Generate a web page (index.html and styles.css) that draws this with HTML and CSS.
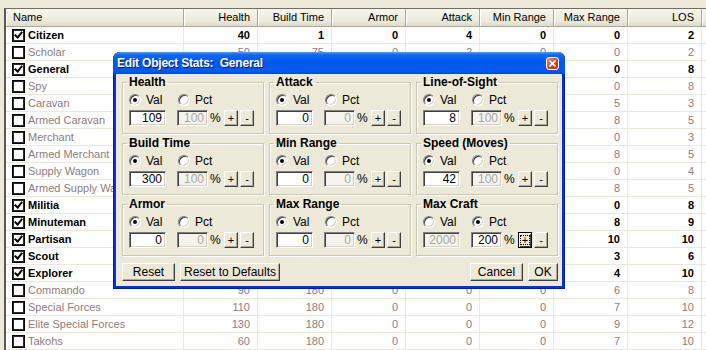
FILE: index.html
```html
<!DOCTYPE html>
<html lang="en">
<head>
    <meta charset="UTF-8">
    <title>Edit Object Stats</title>
    <link rel="stylesheet" href="styles.css">
</head>
<body>
    <div class="list">
        <div class="head">
            <div class="hcell left">Name</div>
            <div class="hcell">Health</div>
            <div class="hcell">Build Time</div>
            <div class="hcell">Armor</div>
            <div class="hcell">Attack</div>
            <div class="hcell">Min Range</div>
            <div class="hcell">Max Range</div>
            <div class="hcell">LOS</div>
            <div class="hcell rest"></div>
        </div>
        <div class="row on"><div class="cell name"><span class="check"></span>Citizen</div><div class="cell">40</div><div class="cell">1</div><div class="cell">0</div><div class="cell">4</div><div class="cell">0</div><div class="cell">0</div><div class="cell">2</div><div class="cell"></div></div>
        <div class="row"><div class="cell name"><span class="check"></span>Scholar</div><div class="cell">50</div><div class="cell">75</div><div class="cell">0</div><div class="cell">2</div><div class="cell">0</div><div class="cell">0</div><div class="cell">2</div><div class="cell"></div></div>
        <div class="row on"><div class="cell name"><span class="check"></span>General</div><div class="cell">109</div><div class="cell">300</div><div class="cell">0</div><div class="cell">0</div><div class="cell">0</div><div class="cell">0</div><div class="cell">8</div><div class="cell"></div></div>
        <div class="row"><div class="cell name"><span class="check"></span>Spy</div><div class="cell">50</div><div class="cell">60</div><div class="cell">0</div><div class="cell">2</div><div class="cell">0</div><div class="cell">0</div><div class="cell">8</div><div class="cell"></div></div>
        <div class="row"><div class="cell name"><span class="check"></span>Caravan</div><div class="cell">80</div><div class="cell">90</div><div class="cell">2</div><div class="cell">0</div><div class="cell">0</div><div class="cell">5</div><div class="cell">3</div><div class="cell"></div></div>
        <div class="row"><div class="cell name"><span class="check"></span>Armed Caravan</div><div class="cell">100</div><div class="cell">120</div><div class="cell">2</div><div class="cell">4</div><div class="cell">0</div><div class="cell">8</div><div class="cell">5</div><div class="cell"></div></div>
        <div class="row"><div class="cell name"><span class="check"></span>Merchant</div><div class="cell">60</div><div class="cell">90</div><div class="cell">0</div><div class="cell">0</div><div class="cell">0</div><div class="cell">0</div><div class="cell">3</div><div class="cell"></div></div>
        <div class="row"><div class="cell name"><span class="check"></span>Armed Merchant</div><div class="cell">80</div><div class="cell">120</div><div class="cell">1</div><div class="cell">4</div><div class="cell">0</div><div class="cell">8</div><div class="cell">5</div><div class="cell"></div></div>
        <div class="row"><div class="cell name"><span class="check"></span>Supply Wagon</div><div class="cell">80</div><div class="cell">90</div><div class="cell">2</div><div class="cell">0</div><div class="cell">0</div><div class="cell">0</div><div class="cell">4</div><div class="cell"></div></div>
        <div class="row"><div class="cell name"><span class="check"></span>Armed Supply Wagon</div><div class="cell">100</div><div class="cell">120</div><div class="cell">2</div><div class="cell">4</div><div class="cell">0</div><div class="cell">8</div><div class="cell">5</div><div class="cell"></div></div>
        <div class="row on"><div class="cell name"><span class="check"></span>Militia</div><div class="cell">60</div><div class="cell">60</div><div class="cell">0</div><div class="cell">4</div><div class="cell">0</div><div class="cell">0</div><div class="cell">8</div><div class="cell"></div></div>
        <div class="row on"><div class="cell name"><span class="check"></span>Minuteman</div><div class="cell">80</div><div class="cell">90</div><div class="cell">0</div><div class="cell">5</div><div class="cell">0</div><div class="cell">8</div><div class="cell">9</div><div class="cell"></div></div>
        <div class="row on"><div class="cell name"><span class="check"></span>Partisan</div><div class="cell">90</div><div class="cell">120</div><div class="cell">0</div><div class="cell">6</div><div class="cell">0</div><div class="cell">10</div><div class="cell">10</div><div class="cell"></div></div>
        <div class="row on"><div class="cell name"><span class="check"></span>Scout</div><div class="cell">60</div><div class="cell">60</div><div class="cell">0</div><div class="cell">2</div><div class="cell">0</div><div class="cell">3</div><div class="cell">6</div><div class="cell"></div></div>
        <div class="row on"><div class="cell name"><span class="check"></span>Explorer</div><div class="cell">70</div><div class="cell">90</div><div class="cell">0</div><div class="cell">3</div><div class="cell">0</div><div class="cell">4</div><div class="cell">10</div><div class="cell"></div></div>
        <div class="row"><div class="cell name"><span class="check"></span>Commando</div><div class="cell">90</div><div class="cell">180</div><div class="cell">0</div><div class="cell">0</div><div class="cell">0</div><div class="cell">6</div><div class="cell">8</div><div class="cell"></div></div>
        <div class="row"><div class="cell name"><span class="check"></span>Special Forces</div><div class="cell">110</div><div class="cell">180</div><div class="cell">0</div><div class="cell">0</div><div class="cell">0</div><div class="cell">7</div><div class="cell">10</div><div class="cell"></div></div>
        <div class="row"><div class="cell name"><span class="check"></span>Elite Special Forces</div><div class="cell">130</div><div class="cell">180</div><div class="cell">0</div><div class="cell">0</div><div class="cell">0</div><div class="cell">9</div><div class="cell">12</div><div class="cell"></div></div>
        <div class="row"><div class="cell name"><span class="check"></span>Takohs</div><div class="cell">60</div><div class="cell">180</div><div class="cell">0</div><div class="cell">0</div><div class="cell">0</div><div class="cell">7</div><div class="cell">10</div><div class="cell"></div></div>
    </div>

    <div class="dialog">
        <div class="titlebar">
            <span class="title">Edit Object Stats:&nbsp; General</span>
            <span class="close">
                <svg width="7" height="7" viewBox="0 0 7 7"><path d="M0.5 0.5 L6.5 6.5 M6.5 0.5 L0.5 6.5" stroke="#fff" stroke-width="1.6"/></svg>
            </span>
        </div>
        <div class="client">
            <div class="groups">
                <fieldset class="group">
                    <legend>Health</legend>
                    <div class="opts"><span class="opt"><span class="radio sel"></span>Val</span><span class="opt"><span class="radio"></span>Pct</span></div>
                    <div class="inputs"><span class="field">109</span><span class="field pct off">100</span><span class="unit">%</span><span class="btn plus">+</span><span class="btn">-</span></div>
                </fieldset>
                <fieldset class="group">
                    <legend>Attack</legend>
                    <div class="opts"><span class="opt"><span class="radio sel"></span>Val</span><span class="opt"><span class="radio"></span>Pct</span></div>
                    <div class="inputs"><span class="field">0</span><span class="field pct off">0</span><span class="unit">%</span><span class="btn plus">+</span><span class="btn">-</span></div>
                </fieldset>
                <fieldset class="group">
                    <legend>Line-of-Sight</legend>
                    <div class="opts"><span class="opt"><span class="radio sel"></span>Val</span><span class="opt"><span class="radio"></span>Pct</span></div>
                    <div class="inputs"><span class="field">8</span><span class="field pct off">100</span><span class="unit">%</span><span class="btn plus">+</span><span class="btn">-</span></div>
                </fieldset>
                <fieldset class="group">
                    <legend>Build Time</legend>
                    <div class="opts"><span class="opt"><span class="radio sel"></span>Val</span><span class="opt"><span class="radio"></span>Pct</span></div>
                    <div class="inputs"><span class="field">300</span><span class="field pct off">100</span><span class="unit">%</span><span class="btn plus">+</span><span class="btn">-</span></div>
                </fieldset>
                <fieldset class="group">
                    <legend>Min Range</legend>
                    <div class="opts"><span class="opt"><span class="radio sel"></span>Val</span><span class="opt"><span class="radio"></span>Pct</span></div>
                    <div class="inputs"><span class="field">0</span><span class="field pct off">0</span><span class="unit">%</span><span class="btn plus">+</span><span class="btn">-</span></div>
                </fieldset>
                <fieldset class="group">
                    <legend>Speed (Moves)</legend>
                    <div class="opts"><span class="opt"><span class="radio sel"></span>Val</span><span class="opt"><span class="radio"></span>Pct</span></div>
                    <div class="inputs"><span class="field">42</span><span class="field pct off">100</span><span class="unit">%</span><span class="btn plus">+</span><span class="btn">-</span></div>
                </fieldset>
                <fieldset class="group">
                    <legend>Armor</legend>
                    <div class="opts"><span class="opt"><span class="radio sel"></span>Val</span><span class="opt"><span class="radio"></span>Pct</span></div>
                    <div class="inputs"><span class="field">0</span><span class="field pct off">0</span><span class="unit">%</span><span class="btn plus">+</span><span class="btn">-</span></div>
                </fieldset>
                <fieldset class="group">
                    <legend>Max Range</legend>
                    <div class="opts"><span class="opt"><span class="radio sel"></span>Val</span><span class="opt"><span class="radio"></span>Pct</span></div>
                    <div class="inputs"><span class="field">0</span><span class="field pct off">0</span><span class="unit">%</span><span class="btn plus">+</span><span class="btn">-</span></div>
                </fieldset>
                <fieldset class="group">
                    <legend>Max Craft</legend>
                    <div class="opts"><span class="opt"><span class="radio"></span>Val</span><span class="opt"><span class="radio sel"></span>Pct</span></div>
                    <div class="inputs"><span class="field off">2000</span><span class="field pct">200</span><span class="unit">%</span><span class="btn plus focus"><span>+</span></span><span class="btn">-</span></div>
                </fieldset>
            </div>
            <div class="actions">
                <span class="button reset">Reset</span>
                <span class="button defaults">Reset to Defaults</span>
                <span class="spacer"></span>
                <span class="button cancel">Cancel</span>
                <span class="button ok">OK</span>
            </div>
        </div>
    </div>
</body>
</html>
```

FILE: styles.css
```css
body {
    margin: 0;
    width: 706px;
    height: 350px;
    overflow: hidden;
    position: relative;
    background-color: #ece9d8;
    font-family: "Liberation Sans", Arial, sans-serif;
    font-size: 11px;
    color: #000;
}
.list {
    margin: 8px 0 0 4px;
    height: 342px;
    background-color: #fff;
    border-top: 1px solid #716f64;
    border-left: 2px solid #5b5a52;
    box-sizing: border-box;
    overflow: hidden;
}
.head,
.row {
    display: grid;
    grid-template-columns: 178px repeat(7, 74px) 1fr;
}
.head {
    height: 18px;
}
.hcell {
    box-sizing: border-box;
    padding: 0 7px;
    line-height: 17px;
    text-align: right;
    background: linear-gradient(#f7f6ef, #ebeadb 70%, #dedbcb);
    border-right: 1px solid #aca899;
    border-bottom: 1px solid #aca899;
    box-shadow: inset 1px 0 0 #fff;
}
.hcell.left {
    text-align: left;
}
.hcell.rest {
    border-right: none;
}
.row {
    height: 17px;
    color: #8d7d7d;
}
.row.on {
    color: #000;
    font-weight: bold;
}
.cell {
    box-sizing: border-box;
    padding-right: 7px;
    line-height: 16px;
    text-align: right;
    border-right: 1px solid #ece9dc;
    border-bottom: 1px solid #ece9dc;
    white-space: nowrap;
    overflow: hidden;
}
.cell.name {
    display: flex;
    align-items: center;
    padding-left: 6px;
    text-align: left;
}
.check {
    position: relative;
    width: 13px;
    height: 13px;
    box-sizing: border-box;
    margin-right: 3px;
    background-color: #fff;
    border: 1px solid #000;
    box-shadow: inset 0 0 0 1px #2a2a2a;
    flex-shrink: 0;
}
.row.on .check::after {
    content: "";
    position: absolute;
    left: 3px;
    top: 0px;
    width: 3px;
    height: 6px;
    border: solid #000;
    border-width: 0 2px 2px 0;
    transform: rotate(40deg);
}

/* dialog */
.dialog {
    position: absolute;
    left: 113px;
    top: 52px;
    width: 452px;
    height: 237px;
    box-sizing: border-box;
    padding: 0 3px 3px;
    display: flex;
    flex-direction: column;
    background-color: #0831d9;
    border-radius: 7px 7px 0 0;
    box-shadow: inset 1px 0 0 #0019cf, inset -1px 0 0 #001ea0, inset 0 -1px 0 #001ea0;
}
.titlebar {
    height: 22px;
    margin: 0 -3px;
    padding: 0 6px 0 4px;
    display: flex;
    align-items: center;
    justify-content: space-between;
    border-radius: 7px 7px 0 0;
    background: linear-gradient(#4aa0ff, #1268f5 12%, #0058ea 45%, #005cf2 85%, #004ad9);
    color: #fff;
    font-weight: bold;
    font-size: 12px;
    letter-spacing: -0.2px;
    text-shadow: 1px 1px 0 #0a1883;
}
.close {
    width: 13px;
    height: 13px;
    box-sizing: border-box;
    display: flex;
    align-items: center;
    justify-content: center;
    border: 1px solid #fff;
    border-radius: 3px;
    background: linear-gradient(135deg, #f08a6c, #d6431e 60%, #c1350f);
}
.client {
    flex: 1;
    padding: 1px 4px 0 6px;
    background-color: #ece9d8;
    display: flex;
    flex-direction: column;
}
.groups {
    display: grid;
    grid-template-columns: repeat(3, 142px);
    column-gap: 5px;
    row-gap: 2px;
}
.group {
    margin: 0;
    padding: 4px 6px 7px;
    border: 1px solid #c9c6b6;
    box-shadow: 1px 1px 0 #fff, inset 1px 1px 0 #fff;
    min-width: 0;
}
.group legend {
    margin-left: -2px;
    padding: 0 2px;
    font-weight: bold;
    font-size: 12px;
    line-height: 14px;
}
.opts {
    display: flex;
    height: 14px;
    align-items: center;
    font-size: 12px;
}
.opt {
    display: flex;
    align-items: center;
    width: 49px;
}
.radio {
    position: relative;
    width: 12px;
    height: 12px;
    box-sizing: border-box;
    margin-right: 5px;
    border-radius: 50%;
    background-color: #fff;
    border: 1px solid;
    border-color: #808080 #fff #fff #808080;
    box-shadow: inset 1px 1px 0 #404040, inset -1px -1px 0 #d4d0c8;
}
.radio.sel::after {
    content: "";
    position: absolute;
    left: 3px;
    top: 3px;
    width: 4px;
    height: 4px;
    border-radius: 50%;
    background-color: #000;
}
.inputs {
    display: flex;
    align-items: center;
    margin-top: 3px;
    height: 16px;
}
.field {
    width: 37px;
    height: 16px;
    box-sizing: border-box;
    padding-right: 3px;
    text-align: right;
    line-height: 14px;
    font-size: 12px;
    background-color: #fff;
    border: 1px solid;
    border-color: #808080 #fff #fff #808080;
    box-shadow: inset 1px 1px 0 #404040, inset -1px -1px 0 #d4d0c8;
}
.field.pct {
    width: 31px;
    margin-left: 11px;
}
.field.off {
    background-color: #f4f3ee;
    color: #aca899;
}
.unit {
    width: 9px;
    margin-left: 2px;
    font-size: 12px;
}
.btn {
    width: 14px;
    height: 16px;
    box-sizing: border-box;
    margin-left: 2px;
    display: flex;
    align-items: center;
    justify-content: center;
    font-size: 11px;
    line-height: 12px;
    background-color: #ece9d8;
    border: 1px solid;
    border-color: #fff #404040 #404040 #fff;
    box-shadow: inset -1px -1px 0 #aca899;
}
.btn.plus {
    margin-left: 5px;
}
.btn.focus {
    border-color: #000;
    box-shadow: inset 1px 1px 0 #fff, inset -1px -1px 0 #404040;
}
.btn.focus span {
    width: 8px;
    height: 8px;
    display: flex;
    align-items: center;
    justify-content: center;
    outline: 1px dotted #000;
    line-height: 8px;
}
.actions {
    display: flex;
    margin-top: 7px;
    gap: 5px;
}
.spacer {
    flex: 1;
}
.button {
    height: 18px;
    box-sizing: border-box;
    display: flex;
    align-items: center;
    justify-content: center;
    font-size: 12px;
    background-color: #ece9d8;
    border: 1px solid;
    border-color: #fff #404040 #404040 #fff;
    box-shadow: inset -1px -1px 0 #aca899;
}
.button.reset {
    width: 53px;
}
.button.defaults {
    width: 100px;
}
.button.cancel {
    width: 53px;
}
.button.ok {
    width: 30px;
}
```
